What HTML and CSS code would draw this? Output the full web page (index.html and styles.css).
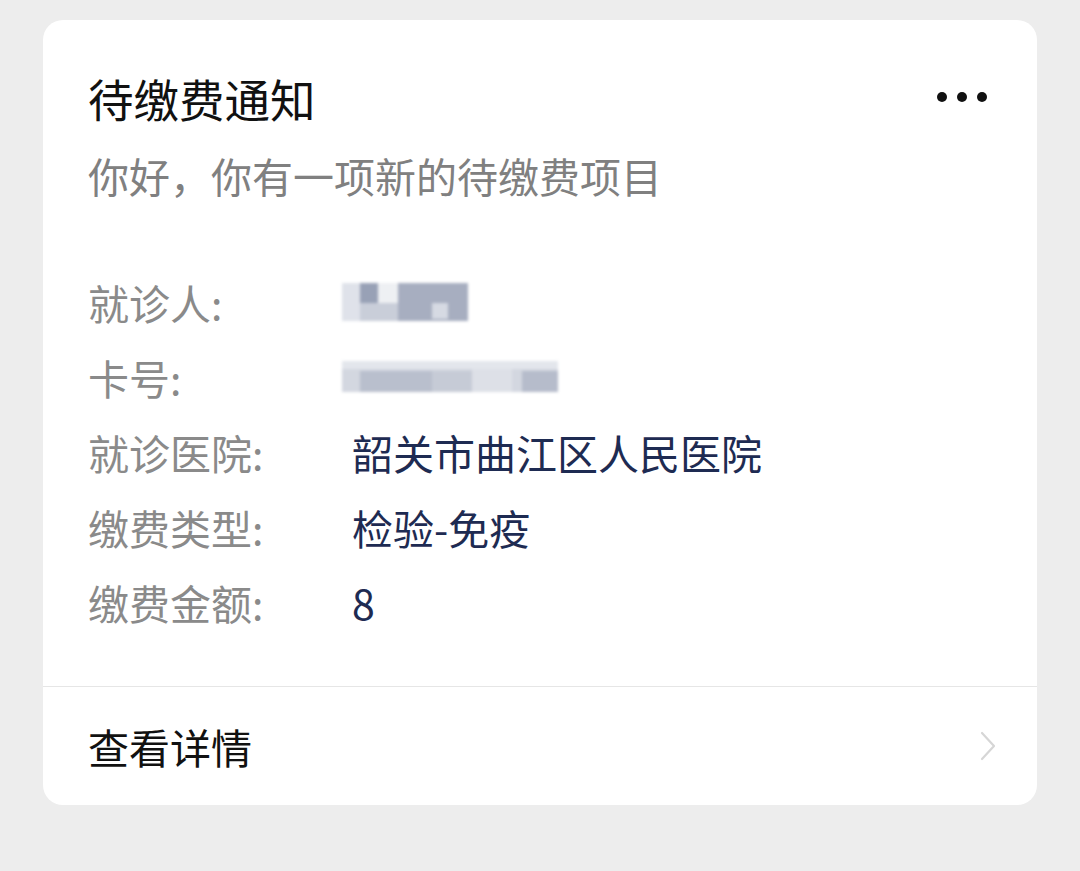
FILE: index.html
```html
<!DOCTYPE html>
<html lang="zh-CN">
<head>
<meta charset="utf-8">
<title>待缴费通知</title>
<link rel="stylesheet" href="styles.css">
</head>
<body>
<div class="card">
  <div class="main">
    <div class="head">
      <div class="title">待缴费通知</div>
      <div class="more"><span></span><span></span><span></span></div>
    </div>
    <div class="subtitle">你好，你有一项新的待缴费项目</div>
    <div class="rows">
      <div class="row"><div class="label">就诊人:</div><div class="value"><div class="mosaic name"><i class="m1"></i><i class="m2"></i><i class="m3"></i><i class="m4"></i><i class="m5"></i></div></div></div>
      <div class="row"><div class="label">卡号:</div><div class="value"><div class="mosaic card-no"><i class="c1"></i><i class="c2"></i><i class="c3"></i><i class="c4"></i><i class="c5"></i></div></div></div>
      <div class="row"><div class="label">就诊医院:</div><div class="value">韶关市曲江区人民医院</div></div>
      <div class="row"><div class="label">缴费类型:</div><div class="value">检验-免疫</div></div>
      <div class="row"><div class="label">缴费金额:</div><div class="value">8</div></div>
    </div>
  </div>
  <div class="footer">
    <div class="link">查看详情</div>
    <svg class="chev" width="18" height="32" viewBox="0 0 18 32"><polyline points="3,3 15,16 3,29" fill="none" stroke="#d6d6d6" stroke-width="2.2" stroke-linecap="round" stroke-linejoin="round"/></svg>
  </div>
</div>
</body>
</html>
```

FILE: styles.css
```css
html, body {
  margin: 0;
  padding: 0;
}
body {
  background: #ededed;
  font-family: "Noto Sans CJK SC", "Noto Sans", sans-serif;
  width: 1080px;
  height: 871px;
  overflow: hidden;
}
.card {
  margin: 20px 0 0 43px;
  width: 994px;
  height: 785px;
  background: #fff;
  border-radius: 20px;
  display: flex;
  flex-direction: column;
}
.main {
  padding: 48px 45px 47px 45px;
  border-bottom: 1px solid #e6e6e6;
}
.head {
  display: flex;
  align-items: center;
  justify-content: space-between;
  height: 60px;
}
.title {
  font-size: 45.5px;
  line-height: 60px;
  color: #111;
}
.more {
  display: flex;
  gap: 10px;
  margin-right: 5px;
  margin-top: -3px;
}
.more span {
  width: 10px;
  height: 10px;
  border-radius: 50%;
  background: #111;
}
.subtitle {
  margin-top: 17px;
  font-size: 41px;
  line-height: 60px;
  color: #808080;
}
.rows {
  margin-top: 59px;
  display: flex;
  flex-direction: column;
}
.row {
  display: flex;
  align-items: center;
  height: 75px;
  font-size: 41px;
}
.label {
  width: 264px;
  color: #8a8a8a;
}
.value {
  color: #1e2b52;
  display: flex;
  align-items: center;
}
.mosaic {
  position: relative;
  filter: blur(1.5px);
}
.mosaic i {
  position: absolute;
  display: block;
}
.name {
  width: 126px;
  height: 38px;
  margin-left: -10px;
  background: #dfe2ea;
}
.name .m1 { left: 18px; top: 0; width: 18px; height: 20px; background: #98a1b6; }
.name .m2 { left: 18px; top: 20px; width: 38px; height: 18px; background: #c9ced9; }
.name .m3 { left: 56px; top: 0; width: 70px; height: 38px; background: #a7aec0; }
.name .m4 { left: 90px; top: 20px; width: 16px; height: 16px; background: #d6dae3; }
.name .m5 { left: 36px; top: 0; width: 20px; height: 20px; background: #eef0f3; }
.card-no {
  width: 216px;
  height: 31px;
  margin-left: -10px;
  background: #d3d7e0;
}
.card-no .c1 { left: 18px; top: 10px; width: 72px; height: 21px; background: #b9bfcd; }
.card-no .c2 { left: 90px; top: 10px; width: 40px; height: 21px; background: #c6cbd6; }
.card-no .c3 { left: 130px; top: 0; width: 40px; height: 31px; background: #dde0e7; }
.card-no .c4 { left: 180px; top: 10px; width: 36px; height: 21px; background: #b6bccb; }
.card-no .c5 { left: 0; top: 0; width: 216px; height: 8px; background: #e3e6ec; }
.footer {
  flex: 1;
  display: flex;
  align-items: center;
  justify-content: space-between;
  padding: 0 40px 0 45px;
}
.link {
  font-size: 41px;
  color: #111;
}
.chev {
  display: block;
}
```
